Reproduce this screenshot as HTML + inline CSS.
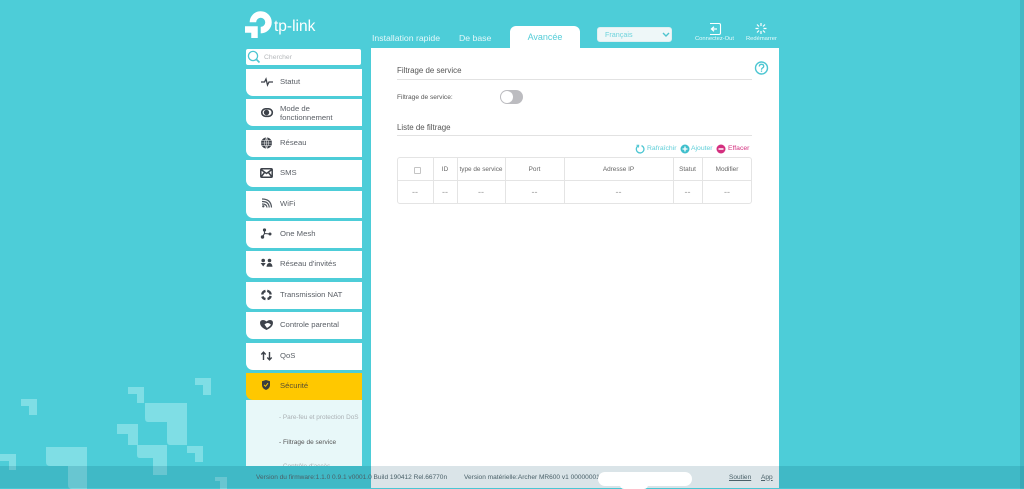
<!DOCTYPE html>
<html lang="fr"><head><meta charset="utf-8"><title>TP-Link</title>
<style>
*{box-sizing:border-box}
html,body{margin:0;padding:0;width:1024px;height:489px;overflow:hidden;background:#4dcdd8;font-family:"Liberation Sans",sans-serif}
.a{position:absolute}
#bg{left:0;top:0}
.tab{position:absolute;top:32px;color:#e4f8fa;font-size:8.7px;line-height:12px;white-space:nowrap}
.item{position:absolute;left:246px;width:116px;height:27px;background:#fff;border-radius:0 0 0 7px;color:#5a5f66;font-size:7.7px;line-height:10px}
.item span{position:absolute;left:34px;top:8px;white-space:nowrap}
.item svg{position:absolute;left:13px;top:5px}
.th,.td{position:absolute;color:#666;font-size:6.4px;line-height:8px;text-align:center;white-space:nowrap}
.td{color:#999;font-size:9px;top:188px}
.vl{position:absolute;top:158px;height:46px;width:1px;background:#e4e4e4}
.ft{position:absolute;top:473.500px;font-size:6.550px;line-height:8px;color:#4a6068;white-space:nowrap}
</style></head><body>
<svg id="bg" class="a" width="1024" height="489"><g fill="#7fdee5">
<path d="M21 399H37V415H29V406H21Z"/><path d="M128 387H144V403H137V394H128Z"/><path d="M195 378H211V395H203V385H195Z"/>
<path d="M145 403H187V445H170Q167 445 167 441V422H148Q145 422 145 418Z"/><path d="M117 424H138V445H128V434H117Z"/>
<path d="M137 445H167V475H153V458H140Q137 458 137 455Z"/><path d="M187 446H203V462H195V453H187Z"/>
<path d="M46 447H87V489H72Q68 489 68 485V466H50Q46 466 46 462Z"/><path d="M0 454H16V470H9V461H0Z"/><path d="M215 477H227V489H220V481H215Z"/>
</g><rect x="1020" width="4" height="489" fill="#44b8c4"/></svg>

<div class="a" style="left:246px;top:400px;width:116px;height:66px;background:#e8f8f9;overflow:hidden">
<div class="a" style="left:33px;top:14px;font-size:6.400px;color:#aab0b4;white-space:nowrap;line-height:8px">- Pare-feu et protection DoS</div>
<div class="a" style="left:33px;top:39px;font-size:6.500px;color:#555;white-space:nowrap;line-height:8px">- Filtrage de service</div>
<div class="a" style="left:33px;top:63px;font-size:6.400px;color:#aab0b4;white-space:nowrap;line-height:8px">- Contrôle d'accès</div>
</div>

<div class="a" style="left:371px;top:48px;width:408px;height:420px;background:#fff"></div>
<div class="a" style="left:0;top:466px;width:1024px;height:22px;background:rgba(17,105,131,.2)"></div>
<div class="a" style="left:0;top:488px;width:1024px;height:1px;background:rgba(17,105,131,.05)"></div>
<div class="a" style="left:371px;top:466px;width:408px;height:22px;background:#dae4e8"></div>
<div class="ft" style="left:256px">Version du firmware:1.1.0 0.9.1 v0001.0 Build 190412 Rel.66770n</div>
<div class="ft" style="left:464px">Version matérielle:Archer MR600 v1 00000001</div>
<div class="a" style="left:598px;top:472px;width:94px;height:14px;background:#fff;border-radius:7px"></div>
<div class="a" style="left:620px;top:480px;width:28px;height:9px;background:#fff;border-radius:4px"></div>
<div class="ft" style="left:729px;text-decoration:underline">Soutien</div>
<div class="ft" style="left:761px;text-decoration:underline">App</div>

<svg class="a" style="left:240px;top:8px" width="40" height="34" fill="none" stroke="#fff" stroke-width="6.500">
<path d="M5 21.500H14.500V30"/><path d="M12.900 14.300A7.800 7.800 0 1 1 20.700 22.100"/></svg>
<div class="a" style="left:274px;top:17px;color:#fff;font-size:15.500px;line-height:20px;white-space:nowrap">tp-link</div>

<div class="tab" style="left:372px">Installation rapide</div>
<div class="tab" style="left:459px">De base</div>
<div class="a" style="left:510px;top:26px;width:70px;height:22px;background:#fff;border-radius:6px 6px 0 0;color:#55cdd8;font-size:9px;line-height:23px;text-align:center">Avancée</div>

<div class="a" style="left:597px;top:27px;width:75px;height:15px;background:#eef7f8;border:1px solid #dfeff1;border-radius:3px;color:#6dd3dc;font-size:7.200px;line-height:14px;padding-left:7px">Français
<svg class="a" style="left:64px;top:4px" width="8" height="6" fill="none" stroke="#4ec4cf" stroke-width="1.400"><path d="M1 1L4 4L7 1"/></svg></div>

<svg class="a" style="left:708px;top:22px" width="14" height="14" fill="none" stroke="#fff" stroke-width="1.100"><path d="M2 1.500H11Q12.500 1.500 12.500 3V11Q12.500 12.500 11 12.500H2"/><path d="M9 7H3.500M6 4.800L3.500 7L6 9.200" stroke-width="1.300"/></svg>
<div class="a" style="left:695px;top:35px;color:#e8fafb;font-size:5.800px;line-height:8px;white-space:nowrap">Connectez-Out</div>
<svg class="a" style="left:754px;top:22px" width="14" height="13" stroke="#fff" stroke-width="1.200"><path d="M7 1V4M7 9V12M1.500 6.500H4.500M9.500 6.500H12.500M3 2.500L5 4.500M11 2.500L9 4.500M3 10.500L5 8.500M11 10.500L9 8.500"/></svg>
<div class="a" style="left:746px;top:35px;color:#e8fafb;font-size:5.800px;line-height:8px;white-space:nowrap">Redémarrer</div>

<div class="a" style="left:246px;top:49px;width:115px;height:16px;background:#fff;border-radius:2px;color:#b5b8bb;font-size:6.800px;line-height:17px;padding-left:18px">Chercher</div>
<svg class="a" style="left:247px;top:50px" width="14" height="14" fill="none" stroke="#4dc6d2" stroke-width="1.300"><circle cx="6" cy="6" r="4.600"/><path d="M9.500 9.500L12.500 12.500" stroke-width="1.600"/></svg>

<div class="item" style="top:69px"><svg width="16" height="16" fill="none" stroke="#3d424a" stroke-width="1.300"><path d="M2 8H5.500L7 5L8.500 11L10 8H14"/></svg><span>Statut</span></div>
<div class="item" style="top:99px"><svg width="16" height="16" style="top:6px;left:14px"><rect x="1.800" y="3.800" width="10.500" height="7.500" rx="3.700" fill="none" stroke="#3d424a" stroke-width="1.600"/><circle cx="6.500" cy="7.500" r="2.700" fill="#3d424a"/></svg><span style="top:5px;line-height:9px">Mode de<br>fonctionnement</span></div>
<div class="item" style="top:130px"><svg width="16" height="16" style="top:6px"><circle cx="7.500" cy="7" r="5.500" fill="#3d424a"/><path d="M2 7H13M2.800 4.500H12.200M2.800 9.500H12.200M7.500 1.500V12.500M7.500 1.500Q3.500 7 7.500 12.500M7.500 1.500Q11.500 7 7.500 12.500" fill="none" stroke="#fff" stroke-width=".5"/></svg><span>Réseau</span></div>
<div class="item" style="top:160px"><svg width="16" height="16" style="top:6px;left:14px" fill="none" stroke="#3d424a" stroke-width="1.500"><rect x=".8" y="2.700" width="11.400" height="8.600" rx="1"/><path d="M1 3.500L6.500 7.500L12 3.500M1 11L4.500 6.500M12 11L8.500 6.500"/></svg><span>SMS</span></div>
<div class="item" style="top:191px"><svg width="16" height="16" style="top:5px;left:15px" fill="none" stroke="#50565e" stroke-width="1.200"><path d="M1 3Q10 3 10.500 11.500M1 5.500Q8 5.500 8.200 11.500M1 8Q5.800 8 6 11.500"/><circle cx="2.300" cy="10.300" r="1.200" fill="#50565e" stroke="none"/></svg><span>WiFi</span></div>
<div class="item" style="top:221px"><svg width="16" height="16" style="left:14px;top:5px" fill="#3d424a"><path d="M2.500 11L4.500 7.500L4.500 4M4.500 7.500L10 8" fill="none" stroke="#3d424a" stroke-width="1.100"/><circle cx="4.500" cy="4" r="1.600"/><circle cx="2.500" cy="11" r="1.700"/><circle cx="10" cy="8" r="1.500"/></svg><span>One Mesh</span></div>
<div class="item" style="top:251px"><svg width="16" height="16" style="top:6px;left:14px" fill="#3d424a"><circle cx="3.200" cy="3.500" r="1.800"/><circle cx="9.500" cy="3.500" r="1.800"/><path d="M.6 6H5.800L3.200 9.500ZM6.500 9.800Q6.800 6 9.500 6Q12.200 6 12.500 9.800Z"/></svg><span>Réseau d'invités</span></div>
<div class="item" style="top:282px"><svg width="16" height="16" style="top:6px" fill="none" stroke="#3d424a" stroke-width="2.400"><path d="M3.200 6.500A4.300 4.300 0 0 1 6.500 2.900M8.200 2.800A4.300 4.300 0 0 1 11.700 6.500M11.700 8A4.300 4.300 0 0 1 8.500 11M6.500 11.100A4.300 4.300 0 0 1 3.300 8.500"/></svg><span>Transmission NAT</span></div>
<div class="item" style="top:312px"><svg width="16" height="16" style="top:5px" fill="#3d424a"><path d="M7.500 13Q1 10 1 6Q1 3 4 3Q6 3 7.500 4.500Q9 3 11 3Q14 3 14 6Q14 10 7.500 13Z"/><path d="M5.500 7.500Q8 5 10.500 6.500L12 7.800Q10 10 8 11Z" fill="#fff"/></svg><span>Controle parental</span></div>
<div class="item" style="top:343px"><svg width="16" height="16" style="left:14px;top:5px" fill="none" stroke="#3d424a" stroke-width="1.400"><path d="M3.500 12V4.500M1.300 6.500L3.500 4.200L5.700 6.500M9.500 4V11.500M7.300 9.500L9.500 11.800L11.700 9.500"/></svg><span>QoS</span></div>
<div class="item" style="top:373px;background:#ffc800;border-radius:0 0 0 7px"><svg width="16" height="16" style="top:5px;left:14px"><path d="M6 2L10 3.200V7Q10 10.500 6 12Q2 10.500 2 7V3.200Z" fill="#3a3d3f"/><path d="M4 6.800L5.500 8.300L8 5.200" fill="none" stroke="#ffc800" stroke-width="1"/></svg><span style="color:#5a5030">Sécurité</span></div>

<div class="a" style="left:397px;top:65px;font-size:7.900px;line-height:11px;color:#555;white-space:nowrap">Filtrage de service</div>
<div class="a" style="left:397px;top:79px;width:355px;height:1px;background:#e2e2e2"></div>
<svg class="a" style="left:754px;top:60px" width="15" height="15" fill="none" stroke="#4dc6d2" stroke-width="1.400"><circle cx="7.500" cy="8" r="6"/><path d="M5.300 6.500Q5.300 4.300 7.500 4.300Q9.700 4.300 9.700 6.200Q9.700 7.300 8.500 7.900Q7.500 8.500 7.500 9.700" stroke-width="1.300"/><path d="M7.500 10.500V11.800" stroke-width="1.300"/></svg>

<div class="a" style="left:397px;top:93.500px;font-size:6.600px;line-height:8px;color:#555;white-space:nowrap">Filtrage de service:</div>
<div class="a" style="left:500px;top:90px;width:23px;height:14px;background:#bcbcc0;border-radius:7px"></div>
<div class="a" style="left:501px;top:91px;width:12px;height:12px;background:#fff;border-radius:6px"></div>

<div class="a" style="left:397px;top:122px;font-size:7.900px;line-height:11px;color:#555;white-space:nowrap">Liste de filtrage</div>
<div class="a" style="left:397px;top:135px;width:355px;height:1px;background:#e2e2e2"></div>

<svg class="a" style="left:635px;top:144px" width="10" height="10" fill="none" stroke="#4dc6d2" stroke-width="1.300"><path d="M3 2A3.800 3.800 0 1 0 6.500 1.600"/><path d="M1.500 1.200L3.700 1.200L3.500 3.500" stroke-width="1"/></svg>
<div class="a" style="left:647px;top:144.500px;font-size:6.800px;line-height:8px;color:#60cfd9;white-space:nowrap">Rafraîchir</div>
<svg class="a" style="left:680px;top:144px" width="10" height="10"><circle cx="5" cy="5" r="4.500" fill="#3fbfcc"/><path d="M2.500 5H7.500M5 2.500V7.500" stroke="#fff" stroke-width="1.300"/></svg>
<div class="a" style="left:691px;top:144.500px;font-size:6.800px;line-height:8px;color:#60cfd9;white-space:nowrap">Ajouter</div>
<svg class="a" style="left:716px;top:144px" width="10" height="10"><circle cx="5" cy="5" r="4.500" fill="#d42f7f"/><path d="M2.500 5H7.500" stroke="#fff" stroke-width="1.500"/></svg>
<div class="a" style="left:728px;top:144.500px;font-size:6.800px;line-height:8px;color:#d42f7f;white-space:nowrap">Effacer</div>

<div class="a" style="left:397px;top:157px;width:355px;height:47px;border:1px solid #e4e4e4;border-radius:3px"></div>
<div class="a" style="left:398px;top:180px;width:353px;height:1px;background:#e4e4e4"></div>
<div class="vl" style="left:433px"></div><div class="vl" style="left:457px"></div><div class="vl" style="left:505px"></div><div class="vl" style="left:564px"></div><div class="vl" style="left:673px"></div><div class="vl" style="left:702px"></div>
<div class="a" style="left:414px;top:166.500px;width:7px;height:7px;border:1px solid #c4c4c4;border-radius:1px"></div>
<div class="th" style="left:433px;width:24px;top:165.500px">ID</div>
<div class="th" style="left:457px;width:48px;top:165.500px">type de service</div>
<div class="th" style="left:505px;width:59px;top:165.500px">Port</div>
<div class="th" style="left:564px;width:109px;top:165.500px">Adresse IP</div>
<div class="th" style="left:673px;width:29px;top:165.500px">Statut</div>
<div class="th" style="left:702px;width:50px;top:165.500px">Modifier</div>
<div class="td" style="left:397px;width:36px">--</div>
<div class="td" style="left:433px;width:24px">--</div>
<div class="td" style="left:457px;width:48px">--</div>
<div class="td" style="left:505px;width:59px">--</div>
<div class="td" style="left:564px;width:109px">--</div>
<div class="td" style="left:673px;width:29px">--</div>
<div class="td" style="left:702px;width:50px">--</div>
</body></html>
